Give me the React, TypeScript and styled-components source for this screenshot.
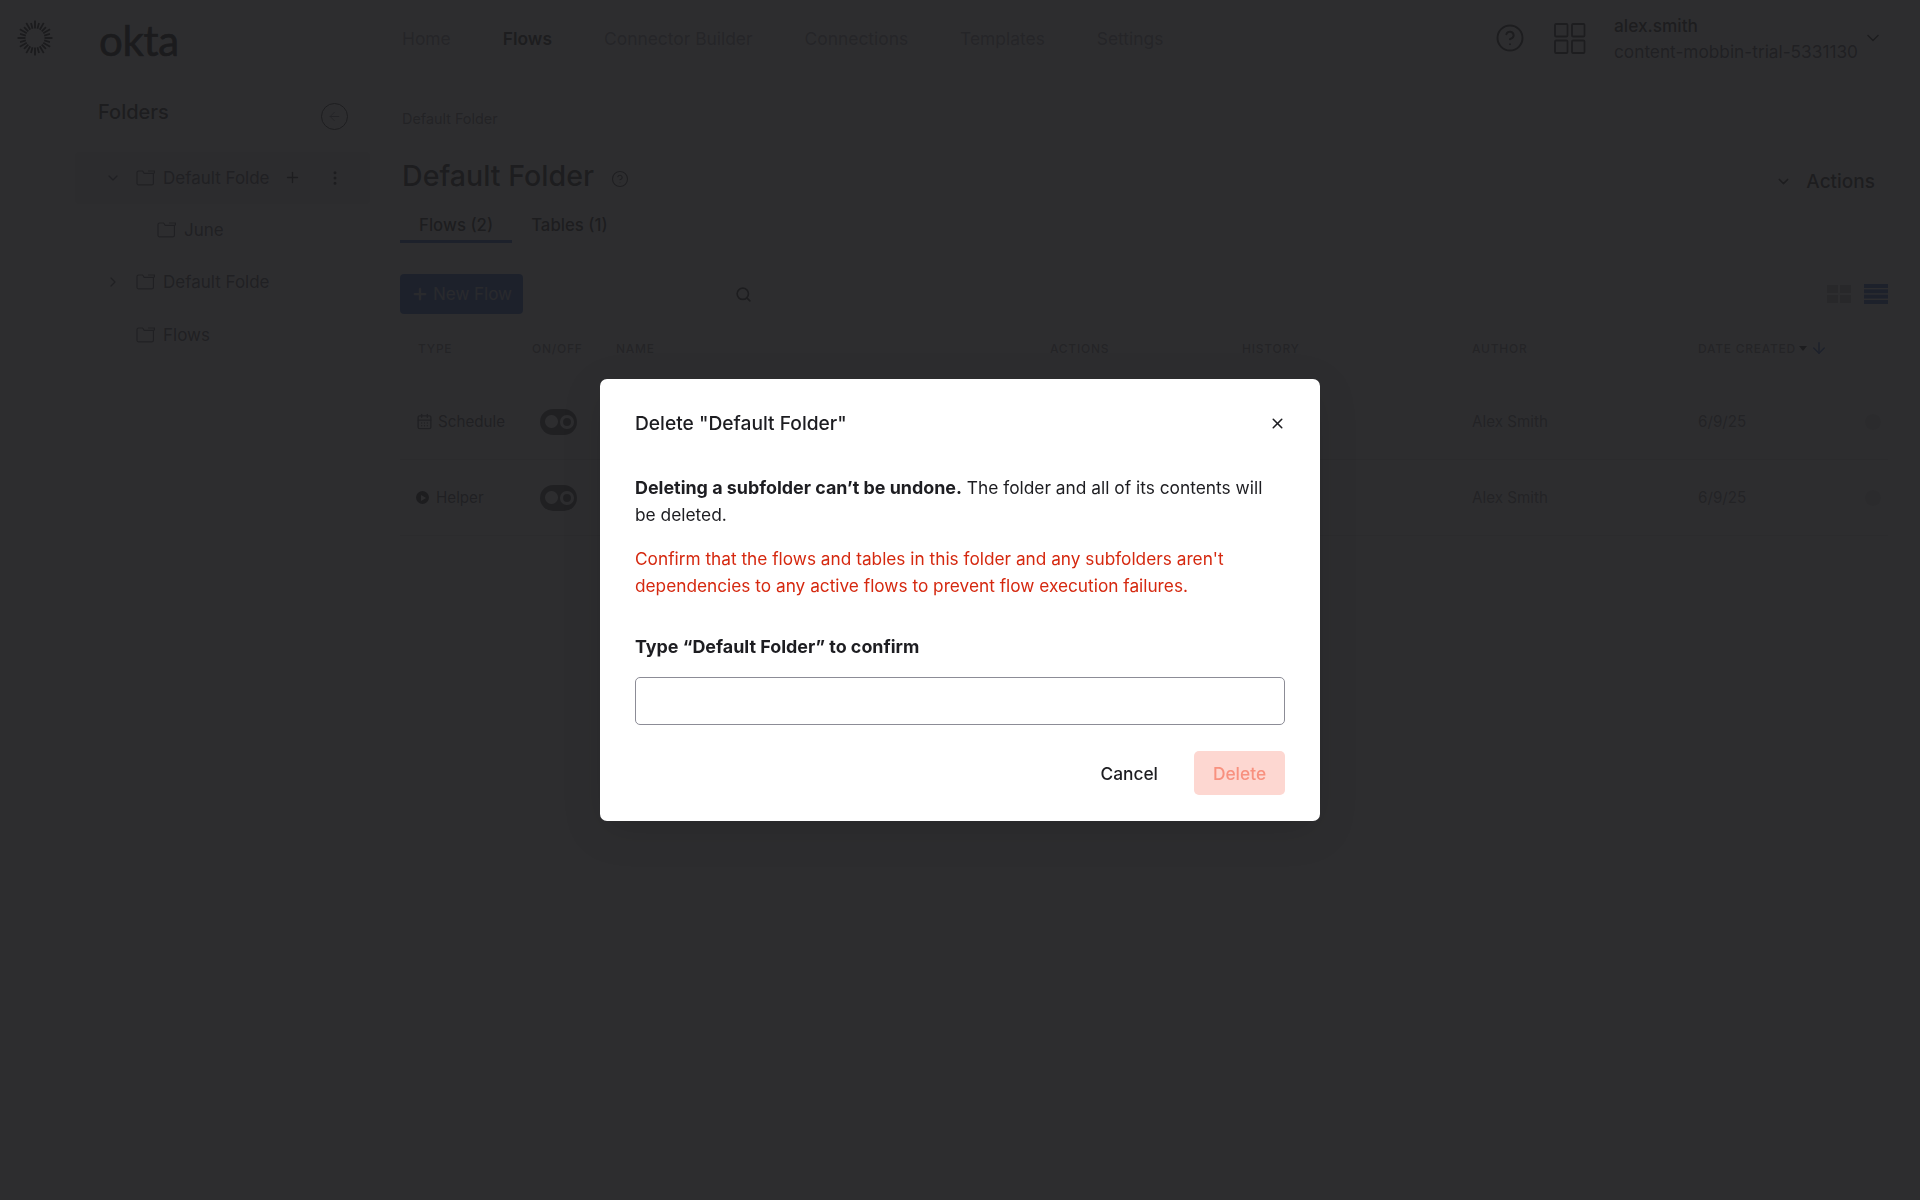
import React from "react";
import styled, { createGlobalStyle } from "styled-components";
import {
  ArrowDown,
  ArrowLeft,
  CalendarDays,
  ChevronDown,
  ChevronRight,
  CircleHelp,
  EllipsisVertical,
  Plus,
  Search,
  X,
} from "lucide-react";

const GlobalStyle = createGlobalStyle`
  html, body {
    margin: 0;
    padding: 0;
    background: #ffffff;
    font-family: Inter, "Noto Sans", sans-serif;
    color: #1d1d21;
  }
  * {
    box-sizing: border-box;
  }
`;

const Page = styled.div`
  width: 1920px;
  height: 1200px;
  overflow: hidden;
  background: #ffffff;
`;

/* Header */
const Header = styled.header`
  display: flex;
  align-items: center;
  height: 76px;
  padding-left: 17px;
`;

const Wordmark = styled.span`
  width: 349px;
  padding-left: 46px;
  font-family: Lato, sans-serif;
  font-size: 42px;
  line-height: 40px;
  letter-spacing: -0.3px;
  color: #000000;
  -webkit-text-stroke: 0.7px #000000;
  position: relative;
  top: 2px;
`;

const Nav = styled.nav`
  display: flex;
  gap: 52px;
`;

const NavItem = styled.span<{ $active?: boolean }>`
  font-size: 17.4px;
  font-weight: ${(p) => (p.$active ? 600 : 400)};
  color: ${(p) => (p.$active ? "#1d1d21" : "#8c8c96")};
`;

const HeaderRight = styled.div`
  display: flex;
  align-items: center;
  margin-left: auto;
  padding-right: 37px;
  color: #1d1d21;
`;

const HelpSlot = styled.span`
  display: flex;
  margin-right: 29px;
`;

const Account = styled.div`
  display: flex;
  flex-direction: column;
  gap: 6px;
  margin: 2px 5px 0 28px;
  font-size: 17.25px;
  line-height: 20px;
`;

const AccountName = styled.span`
  font-weight: 500;
`;

const AccountOrg = styled.span`
  color: #4a4a52;
`;

/* Body */
const Body = styled.div`
  display: flex;
`;

const Sidebar = styled.aside`
  width: 400px;
  flex-shrink: 0;
  padding: 20px 0 0 75px;
`;

const SidebarHead = styled.div`
  display: flex;
  justify-content: space-between;
  width: 273px;
  height: 30px;
  padding-left: 23px;
  margin-bottom: 25.5px;
`;

const SidebarTitle = styled.h2`
  margin: 0;
  font-size: 20px;
  font-weight: 500;
  line-height: 32px;
`;

const CircleButton = styled.span`
  display: flex;
  align-items: center;
  justify-content: center;
  width: 27px;
  height: 27px;
  margin-top: 7px;
  border: 1px solid #1d1d21;
  border-radius: 50%;
  color: #6e6e78;
`;

const FolderRow = styled.div<{ $selected?: boolean; $indent?: number }>`
  display: flex;
  align-items: center;
  width: 295px;
  height: 52.3px;
  padding-left: ${(p) => 30 + (p.$indent ?? 0)}px;
  border-radius: 4px;
  background: ${(p) => (p.$selected ? "#ebebed" : "transparent")};
  color: #4a4a52;
`;

const ChevronSlot = styled.span`
  display: flex;
  justify-content: center;
  width: 16px;
  margin-right: 15px;
`;

const FolderName = styled.span<{ $width?: number }>`
  width: ${(p) => (p.$width ? `${p.$width}px` : "auto")};
  margin-left: 8px;
  font-size: 17px;
  white-space: nowrap;
`;

const RowActions = styled.span`
  display: flex;
  align-items: center;
  gap: 25px;
  margin-left: 14px;
  color: #1d1d21;
`;

const Main = styled.main`
  flex: 1;
  padding: 33px 32px 0 0;
`;

const Breadcrumb = styled.div`
  padding-left: 2px;
  font-size: 14.4px;
  line-height: 20px;
  color: #6e6e78;
`;

const TitleRow = styled.div`
  display: flex;
  align-items: center;
  justify-content: space-between;
  margin-top: 27px;
  padding: 0 13px 0 2px;
`;

const TitleGroup = styled.div`
  display: flex;
  align-items: center;
  gap: 17px;
  color: #3a3a40;
`;

const PageTitle = styled.h1`
  margin: 0;
  font-size: 28.6px;
  font-weight: 500;
  line-height: 40px;
  color: #1d1d21;
`;

const HelpHint = styled.span`
  display: flex;
  margin-top: 6px;
`;

const ActionsButton = styled.span`
  display: flex;
  align-items: center;
  gap: 14px;
  font-size: 19px;
  font-weight: 500;
  position: relative;
  top: 5px;
`;

const Tabs = styled.div`
  display: flex;
  height: 38px;
  margin-top: 9px;
`;

const Tab = styled.span<{ $active?: boolean }>`
  height: 38px;
  padding: 10px 19px 0;
  font-size: 16.8px;
  font-weight: 500;
  line-height: 20px;
  border-bottom: 3px solid ${(p) => (p.$active ? "#2459c8" : "transparent")};
`;

const Toolbar = styled.div`
  display: flex;
  align-items: center;
  margin-top: 31px;
  height: 40px;
`;

const NewFlowButton = styled.span`
  display: flex;
  align-items: center;
  justify-content: center;
  gap: 4px;
  width: 123px;
  height: 40px;
  border-radius: 4px;
  background: #2459c8;
  color: #c4cce0;
  font-size: 17px;
`;

const SearchField = styled.span`
  display: flex;
  justify-content: flex-end;
  width: 229px;
  color: #1d1d21;
`;

const ViewToggle = styled.span`
  display: flex;
  gap: 12px;
  margin-left: auto;
`;

const Columns = styled.div`
  display: grid;
  grid-template-columns: 114px 84px 434px 192px 230px 226px 190px;
  align-items: center;
  padding-left: 18px;
`;

const TableHead = styled(Columns)`
  height: 28px;
  margin-top: 20px;
  font-size: 12px;
  font-weight: 500;
  letter-spacing: 0.75px;
  color: #7c7c86;
`;

const SortCell = styled.span`
  display: flex;
  align-items: center;
  gap: 3px;
`;

const SortCaret = styled.span`
  width: 0;
  height: 0;
  border-left: 4px solid transparent;
  border-right: 4px solid transparent;
  border-top: 5px solid #1d1d21;
`;

const TableBody = styled.div`
  margin-top: 22px;
`;

const TableRow = styled(Columns)`
  height: 76px;
  font-size: 15.2px;
  color: #6e6e78;
  border-bottom: 1px solid #e1e1e1;
`;

const TypeCell = styled.span`
  display: flex;
  align-items: center;
  gap: 5px;
  margin-left: -2px;
  color: #4a4a52;
`;

const HelperDot = styled.span`
  display: flex;
  align-items: center;
  justify-content: center;
  width: 13px;
  height: 13px;
  margin-right: 2px;
  border-radius: 50%;
  background: #1d1d21;
  &::after {
    content: "";
    border-left: 5px solid #ffffff;
    border-top: 3px solid transparent;
    border-bottom: 3px solid transparent;
    margin-left: 1px;
  }
`;

const Toggle = styled.span`
  display: flex;
  align-items: center;
  justify-content: space-between;
  width: 37px;
  height: 26px;
  margin-left: 8px;
  padding: 0 3px 0 5px;
  border-radius: 13px;
  background: #4a4a50;
`;

const ToggleKnob = styled.span`
  width: 13px;
  height: 13px;
  border-radius: 50%;
  background: #ffffff;
`;

const ToggleRing = styled.span`
  width: 14px;
  height: 14px;
  border: 3px solid #ffffff;
  border-radius: 50%;
`;

const DateCell = styled.span`
  display: flex;
  align-items: center;
  justify-content: space-between;
  padding-right: 7px;
`;

const RowMenu = styled.span`
  width: 16px;
  height: 16px;
  border-radius: 50%;
  background: #dededf;
`;

/* Modal */
const Overlay = styled.div`
  position: fixed;
  inset: 0;
  display: flex;
  align-items: center;
  justify-content: center;
  background: rgba(29, 29, 31, 0.93);
`;

const Modal = styled.div`
  width: 720px;
  height: 442px;
  padding: 27px 35px 0;
  border-radius: 7px;
  background: #ffffff;
  box-shadow: 0 10px 40px rgba(0, 0, 0, 0.12);
`;

const ModalHead = styled.div`
  display: flex;
  align-items: center;
  justify-content: space-between;
  height: 34px;
  color: #1d1d21;
`;

const ModalTitle = styled.h3`
  margin: 0;
  font-size: 19.2px;
  font-weight: 500;
`;

const CloseButton = styled.span`
  display: flex;
  margin-right: -1px;
`;

const BodyText = styled.p<{ $danger?: boolean }>`
  margin: ${(p) => (p.$danger ? "17px 0 0" : "34px 0 0")};
  font-size: ${(p) => (p.$danger ? "17.25px" : "17.33px")};
  line-height: 27px;
  color: ${(p) => (p.$danger ? "#d5280f" : "#1d1d21")};

  strong {
    font-size: 17.9px;
    font-weight: 700;
  }
`;

const FieldLabel = styled.label`
  display: block;
  margin-top: 34px;
  font-size: 17.9px;
  font-weight: 700;
  line-height: 27px;
  color: #1d1d21;
`;

const TextInput = styled.input`
  display: block;
  width: 650px;
  height: 48px;
  margin-top: 17px;
  border: 1px solid #8c8c96;
  border-radius: 5px;
  background: #ffffff;
  outline: none;
`;

const ModalFooter = styled.div`
  display: flex;
  align-items: center;
  justify-content: flex-end;
  gap: 36px;
  margin-top: 26px;
`;

const CancelButton = styled.span`
  font-size: 17.33px;
  font-weight: 500;
  color: #1d1d21;
`;

const DeleteButton = styled.span`
  display: flex;
  align-items: center;
  justify-content: center;
  width: 91px;
  height: 44px;
  border-radius: 5px;
  background: #fdd7d1;
  color: #f8917f;
  font-size: 17.33px;
  font-weight: 500;
`;

const SunLogo = () => (
  <svg width="36" height="36" viewBox="0 0 36 36" stroke="#000000" strokeWidth="1.8">
    {Array.from({ length: 24 }, (_, i) => {
      const a = (i * Math.PI) / 12;
      const long = i % 2 === 0 ? 17.5 : 15.5;
      return (
        <line
          key={i}
          x1={18 + 9.5 * Math.cos(a)}
          y1={18 + 9.5 * Math.sin(a)}
          x2={18 + long * Math.cos(a)}
          y2={18 + long * Math.sin(a)}
        />
      );
    })}
  </svg>
);

const FolderIcon = () => (
  <svg width="19" height="16" viewBox="0 0 19 16" fill="none" stroke="currentColor" strokeWidth="1.2">
    <path d="M1 2.6c0-.9.7-1.6 1.6-1.6h4l1.6 2.4h9.2v9.9c0 .9-.7 1.6-1.6 1.6H2.6c-.9 0-1.6-.7-1.6-1.6z" />
    <path d="M12 1h6.4v2.4" />
  </svg>
);

const AppGridIcon = () => (
  <svg width="32" height="31" viewBox="0 0 32 31" fill="none" stroke="#1d1d21" strokeWidth="1.8">
    <rect x="1" y="1" width="12.5" height="12.5" rx="1" />
    <rect x="18" y="1" width="12.5" height="12.5" rx="1" />
    <rect x="1" y="17.5" width="12.5" height="12.5" rx="1" />
    <rect x="18" y="17.5" width="12.5" height="12.5" rx="1" />
  </svg>
);

const TileViewIcon = () => (
  <svg width="25" height="20" viewBox="0 0 25 20" fill="#b0b0b8">
    <rect x="0" y="1" width="11" height="8" />
    <rect x="13" y="1" width="11" height="8" />
    <rect x="0" y="11" width="11" height="8" />
    <rect x="13" y="11" width="11" height="8" />
  </svg>
);

const ListViewIcon = () => (
  <svg width="24" height="20" viewBox="0 0 24 20" fill="#2459c8">
    <rect x="0" y="0" width="24" height="4" />
    <rect x="0" y="5.3" width="24" height="4" />
    <rect x="0" y="10.6" width="24" height="4" />
    <rect x="0" y="16" width="24" height="4" />
  </svg>
);

const flows = [
  { type: "Schedule", author: "Alex Smith", date: "6/9/25" },
  { type: "Helper", author: "Alex Smith", date: "6/9/25" },
];

const App: React.FC = () => {
  return (
    <Page>
      <GlobalStyle />
      <Header>
        <SunLogo />
        <Wordmark>okta</Wordmark>
        <Nav>
          <NavItem>Home</NavItem>
          <NavItem $active>Flows</NavItem>
          <NavItem>Connector Builder</NavItem>
          <NavItem>Connections</NavItem>
          <NavItem>Templates</NavItem>
          <NavItem>Settings</NavItem>
        </Nav>
        <HeaderRight>
          <HelpSlot>
            <CircleHelp size={30} strokeWidth={1.6} />
          </HelpSlot>
          <AppGridIcon />
          <Account>
            <AccountName>alex.smith</AccountName>
            <AccountOrg>content-mobbin-trial-5331130</AccountOrg>
          </Account>
          <ChevronDown size={20} />
        </HeaderRight>
      </Header>

      <Body>
        <Sidebar>
          <SidebarHead>
            <SidebarTitle>Folders</SidebarTitle>
            <CircleButton>
              <ArrowLeft size={15} strokeWidth={1.5} />
            </CircleButton>
          </SidebarHead>
          <FolderRow $selected>
            <ChevronSlot>
              <ChevronDown size={16} />
            </ChevronSlot>
            <FolderIcon />
            <FolderName $width={107}>Default Folde</FolderName>
            <RowActions>
              <Plus size={17} />
              <EllipsisVertical size={18} />
            </RowActions>
          </FolderRow>
          <FolderRow $indent={21}>
            <ChevronSlot />
            <FolderIcon />
            <FolderName>June</FolderName>
          </FolderRow>
          <FolderRow>
            <ChevronSlot>
              <ChevronRight size={16} />
            </ChevronSlot>
            <FolderIcon />
            <FolderName $width={107}>Default Folde</FolderName>
          </FolderRow>
          <FolderRow>
            <ChevronSlot />
            <FolderIcon />
            <FolderName>Flows</FolderName>
          </FolderRow>
        </Sidebar>

        <Main>
          <Breadcrumb>Default Folder</Breadcrumb>
          <TitleRow>
            <TitleGroup>
              <PageTitle>Default Folder</PageTitle>
              <HelpHint>
                <CircleHelp size={18} strokeWidth={1.6} />
              </HelpHint>
            </TitleGroup>
            <ActionsButton>
              <ChevronDown size={17} />
              Actions
            </ActionsButton>
          </TitleRow>
          <Tabs>
            <Tab $active>Flows (2)</Tab>
            <Tab>Tables (1)</Tab>
          </Tabs>
          <Toolbar>
            <NewFlowButton>
              <Plus size={18} strokeWidth={3} />
              New Flow
            </NewFlowButton>
            <SearchField>
              <Search size={17} strokeWidth={2.4} />
            </SearchField>
            <ViewToggle>
              <TileViewIcon />
              <ListViewIcon />
            </ViewToggle>
          </Toolbar>
          <TableHead>
            <span>TYPE</span>
            <span>ON/OFF</span>
            <span>NAME</span>
            <span>ACTIONS</span>
            <span>HISTORY</span>
            <span>AUTHOR</span>
            <SortCell>
              DATE CREATED
              <SortCaret />
              <ArrowDown size={18} color="#2459c8" />
            </SortCell>
          </TableHead>
          <TableBody>
            {flows.map((flow) => (
              <TableRow key={flow.type}>
                <TypeCell>
                  {flow.type === "Schedule" ? <CalendarDays size={17} /> : <HelperDot />}
                  {flow.type}
                </TypeCell>
                <Toggle>
                  <ToggleKnob />
                  <ToggleRing />
                </Toggle>
                <span />
                <span />
                <span />
                <span>{flow.author}</span>
                <DateCell>
                  {flow.date}
                  <RowMenu />
                </DateCell>
              </TableRow>
            ))}
          </TableBody>
        </Main>
      </Body>

      <Overlay>
        <Modal role="dialog" aria-modal="true">
          <ModalHead>
            <ModalTitle>Delete "Default Folder"</ModalTitle>
            <CloseButton>
              <X size={17} strokeWidth={2.2} />
            </CloseButton>
          </ModalHead>
          <BodyText>
            <strong>Deleting a subfolder can’t be undone.</strong> The folder and all of its contents will be deleted.
          </BodyText>
          <BodyText $danger>
            Confirm that the flows and tables in this folder and any subfolders aren't dependencies to any active flows
            to prevent flow execution failures.
          </BodyText>
          <FieldLabel htmlFor="confirm-name">Type “Default Folder” to confirm</FieldLabel>
          <TextInput id="confirm-name" type="text" />
          <ModalFooter>
            <CancelButton>Cancel</CancelButton>
            <DeleteButton>Delete</DeleteButton>
          </ModalFooter>
        </Modal>
      </Overlay>
    </Page>
  );
};

export default App;
